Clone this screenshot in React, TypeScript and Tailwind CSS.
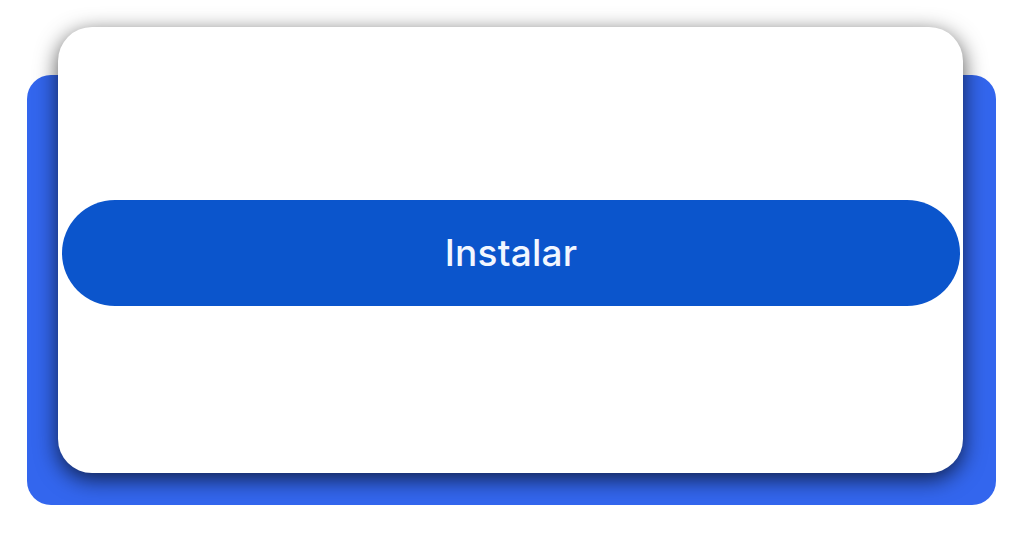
import React from 'react';

export default function App() {
  return (
    <div className="w-[1024px] h-[536px] bg-white overflow-hidden pt-[75px] pl-[27px]" style={{ fontFamily: 'Inter, "Noto Sans", sans-serif' }}>
      {/* Blue backdrop */}
      <div className="flex flex-col w-[969px] h-[430px] rounded-[24px] bg-[#3366ee] pl-[31px] pr-[33px] pb-[32px]">
        {/* Card */}
        <div className="-mt-[48px] h-[446px] rounded-[34px] bg-white shadow-[0_6px_22px_rgba(0,0,0,0.7)] flex items-center pl-[4px] pr-[3px]">
          <button className="w-full h-[106px] mt-[6px] rounded-full bg-[#0b55cc] text-[#f2f7ff] text-[37px] font-medium tracking-[0.2px] flex items-center justify-center">
            Instalar
          </button>
        </div>
      </div>
    </div>
  );
}
